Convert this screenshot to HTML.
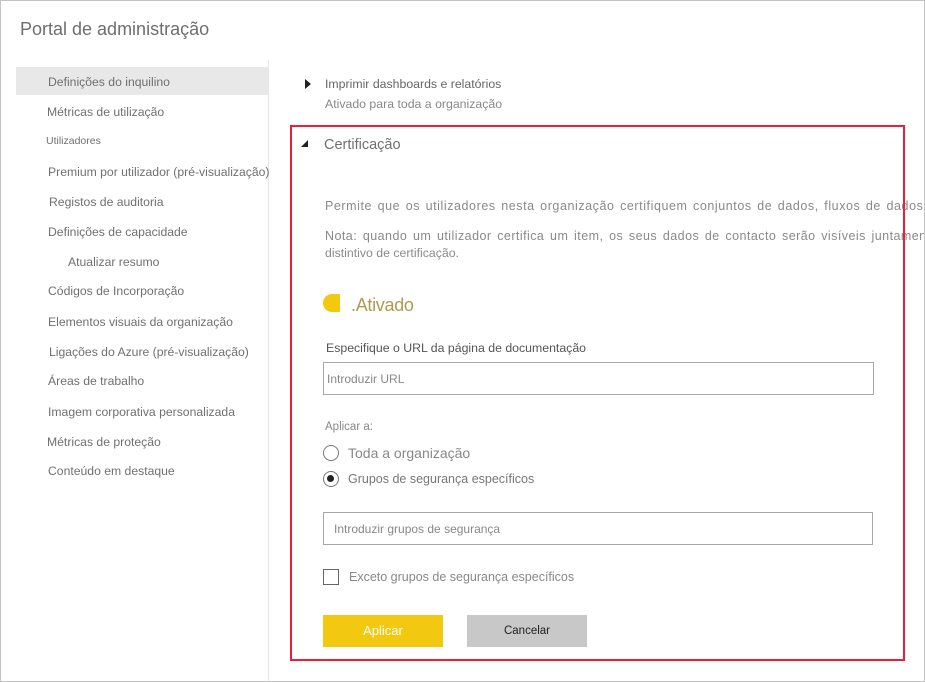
<!DOCTYPE html>
<html><head><meta charset="utf-8"><style>
*{margin:0;padding:0;box-sizing:border-box}
html,body{width:925px;height:682px;overflow:hidden;background:#fff}
body{position:relative;font-family:"Liberation Sans",Arial,sans-serif;color:#777}
.win{position:absolute;left:0;top:0;width:925px;height:682px;overflow:hidden}
.bd{position:absolute;left:0;top:0;width:925px;height:682px;border:1px solid #c4c4c4;pointer-events:none}
.a{position:absolute;white-space:nowrap}
.nav{font-size:12.2px;color:#707070}
.sel{position:absolute;left:16px;top:67px;width:252px;height:28px;background:#e8e8e8}
.side{position:absolute;left:268px;top:60px;width:1px;height:622px;background:#e6e6e6}
.red{position:absolute;left:290px;top:125px;width:615px;height:536px;border:2px solid #e8203f}
.in{position:absolute;border:1px solid #a8a8a8;height:33px;font-size:12px;color:#888;padding-left:10px;line-height:31px}
</style></head><body><div class="win">
<div class="a" style="left:20px;top:19px;font-size:18px;color:#6e6e6e">Portal de administração</div>
<div class="sel"></div>
<div class="side"></div>
<div class="a nav" style="left:48px;top:75px">Definições do inquilino</div>
<div class="a nav" style="left:47px;top:105px">Métricas de utilização</div>
<div class="a nav" style="left:46px;top:135px;font-size:10.5px">Utilizadores</div>
<div class="a nav" style="left:48px;top:165px">Premium por utilizador (pré-visualização)</div>
<div class="a nav" style="left:49px;top:195px">Registos de auditoria</div>
<div class="a nav" style="left:48px;top:225px">Definições de capacidade</div>
<div class="a nav" style="left:68px;top:255px">Atualizar resumo</div>
<div class="a nav" style="left:48px;top:284px">Códigos de Incorporação</div>
<div class="a nav" style="left:48px;top:315px">Elementos visuais da organização</div>
<div class="a nav" style="left:49px;top:345px">Ligações do Azure (pré-visualização)</div>
<div class="a nav" style="left:48px;top:374px">Áreas de trabalho</div>
<div class="a nav" style="left:48px;top:405px">Imagem corporativa personalizada</div>
<div class="a nav" style="left:47px;top:435px">Métricas de proteção</div>
<div class="a nav" style="left:48px;top:464px">Conteúdo em destaque</div>

<svg class="a" style="left:305px;top:79px" width="6" height="10"><polygon points="0,0 6,5 0,10" fill="#222"/></svg>
<div class="a" style="left:325px;top:77px;font-size:12.3px;color:#666">Imprimir dashboards e relatórios</div>
<div class="a" style="left:325px;top:97px;font-size:12.3px;color:#888">Ativado para toda a organização</div>

<svg class="a" style="left:301px;top:140px" width="7" height="7"><polygon points="7,0 7,7 0,7" fill="#222"/></svg>
<div class="a" style="left:324px;top:137px;font-size:14.5px;color:#707070">Certificação</div>
<div class="a" style="left:325px;top:199px;font-size:12.5px;color:#8a8a8a;letter-spacing:.57px;word-spacing:1.5px">Permite que os utilizadores nesta organização certifiquem conjuntos de dados, fluxos de dados, relatórios</div>
<div class="a" style="left:325px;top:229px;font-size:12.5px;color:#8a8a8a;letter-spacing:.45px;word-spacing:1.8px">Nota: quando um utilizador certifica um item, os seus dados de contacto serão visíveis juntamente com o</div>
<div class="a" style="left:325px;top:246px;font-size:12.3px;color:#8a8a8a">distintivo de certificação.</div>
<div class="a" style="left:323px;top:294px;width:17px;height:18px;background:#f2c811;border-radius:9px 1px 1px 9px"></div>
<div class="a" style="left:351px;top:295px;font-size:18px;color:#b09a50;letter-spacing:-.3px">.Ativado</div>
<div class="a" style="left:326px;top:341px;font-size:12.3px;color:#555">Especifique o URL da página de documentação</div>
<div class="in" style="left:323px;top:362px;width:551px;padding-left:3px;line-height:33px">Introduzir URL</div>
<div class="a" style="left:325px;top:421px;font-size:11.5px;color:#888">Aplicar a:</div>
<div class="a" style="left:323px;top:445px;width:16px;height:16px;border:1.5px solid #777;border-radius:50%"></div>
<div class="a" style="left:348px;top:445px;font-size:14px;color:#888">Toda a organização</div>
<div class="a" style="left:323px;top:471px;width:16px;height:16px;border:1.5px solid #777;border-radius:50%"><div style="position:absolute;left:3px;top:3px;width:7px;height:7px;border-radius:50%;background:#222"></div></div>
<div class="a" style="left:348px;top:472px;font-size:12.5px;color:#777">Grupos de segurança específicos</div>
<div class="in" style="left:323px;top:512px;width:550px;line-height:33px">Introduzir grupos de segurança</div>
<div class="a" style="left:323px;top:569px;width:16px;height:16px;border:1.5px solid #666"></div>
<div class="a" style="left:349px;top:570px;font-size:12.5px;color:#888">Exceto grupos de segurança específicos</div>
<div class="a" style="left:323px;top:615px;width:120px;height:32px;background:#f2c811;color:#fff;font-size:13px;text-align:center;line-height:32px">Aplicar</div>
<div class="a" style="left:467px;top:615px;width:120px;height:32px;background:#c8c8c8;color:#222;font-size:11.5px;text-align:center;line-height:32px">Cancelar</div>
<div class="red"></div>
<div class="bd"></div>
</div></body></html>
